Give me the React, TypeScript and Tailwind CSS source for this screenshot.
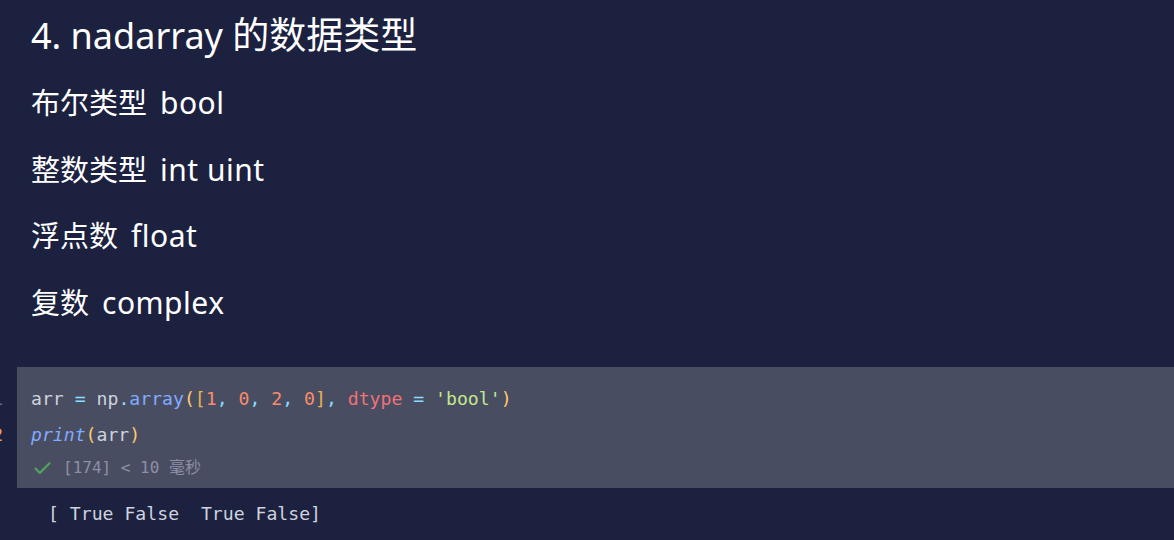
import { Check } from 'lucide-react';

const SANS = { fontFamily: '"Noto Sans", "Noto Sans CJK SC", sans-serif' };
const MONO = { fontFamily: '"DejaVu Sans Mono", "Noto Sans CJK SC", monospace' };

const LINES = [
  ['布尔类型', 'bool'],
  ['整数类型', 'int uint'],
  ['浮点数', 'float'],
  ['复数', 'complex'],
];

export default function App() {
  return (
    <div className="w-[1174px] h-[540px] overflow-hidden bg-[#1c2140] text-white" style={SANS}>
      {/* Markdown */}
      <div className="pl-[31px]">
        <h1 className="h-[70px] leading-[70px] text-[36px] font-normal">
          4. nadarray <span className="text-[37px]">的数据类型</span>
        </h1>
        {LINES.map(([zh, en]) => (
          <p key={zh} className="h-[66.5px] leading-[66.5px] text-[29px]">
            {zh}
            <span className="ml-[13px] text-[30px] tracking-[0.5px]">{en}</span>
          </p>
        ))}
      </div>

      {/* Code cell */}
      <div className="mt-[31px] flex" style={MONO}>
        <div className="w-[17px] shrink-0 overflow-hidden pt-[14px] text-[18px]">
          <div className="h-[36px] leading-[36px] flex justify-end pr-[14px] text-[#6b7089]">1</div>
          <div className="h-[36px] leading-[36px] flex justify-end pr-[14px] text-[#e6a050]">2</div>
        </div>
        <div className="flex-1 bg-[#494d62] pl-[14px] pt-[14px] pb-[5px] text-[18.15px] text-[#cdd3de]">
          <div className="h-[36px] leading-[36px] whitespace-pre">
            arr <span className="text-[#89ddff]">=</span> np<span className="text-[#89ddff]">.</span>
            <span className="text-[#82aaff]">array</span>
            <span className="text-[#ffcb6b]">(</span>
            <span className="text-[#e6b450]">[</span>
            <span className="text-[#f78c6c]">1</span>
            <span className="text-[#89ddff]">, </span>
            <span className="text-[#f78c6c]">0</span>
            <span className="text-[#89ddff]">, </span>
            <span className="text-[#f78c6c]">2</span>
            <span className="text-[#89ddff]">, </span>
            <span className="text-[#f78c6c]">0</span>
            <span className="text-[#e6b450]">]</span>
            <span className="text-[#89ddff]">, </span>
            <span className="text-[#f07178]">dtype</span> <span className="text-[#89ddff]">=</span>{' '}
            <span className="text-[#c3e88d]">'bool'</span>
            <span className="text-[#ffcb6b]">)</span>
          </div>
          <div className="h-[36px] leading-[36px] whitespace-pre">
            <span className="italic text-[#82aaff]">print</span>
            <span className="text-[#ffcb6b]">(</span>arr<span className="text-[#ffcb6b]">)</span>
          </div>
          <div className="h-[30px] flex items-center gap-[10px] text-[16px] text-[#8b90a6]">
            <Check className="w-[21px] h-[21px] text-[#4fa35f] ml-[1px]" strokeWidth={2.5} />
            <span className="whitespace-pre">[174] &lt; 10 毫秒</span>
          </div>
        </div>
      </div>

      {/* Output */}
      <div className="h-[52px] leading-[52px] pl-[48px] text-[18.15px] text-[#cfd3df] whitespace-pre" style={MONO}>
        [ True False  True False]
      </div>
    </div>
  );
}
